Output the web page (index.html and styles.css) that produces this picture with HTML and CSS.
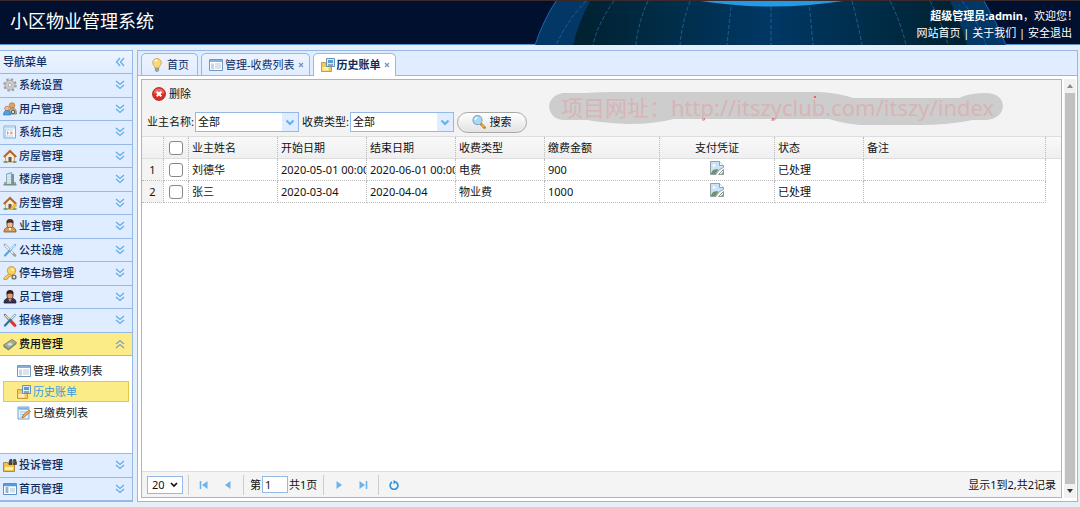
FILE: index.html
```html
<!DOCTYPE html>
<html lang="zh-CN">
<head>
<meta charset="utf-8">
<title>小区物业管理系统</title>
<link rel="stylesheet" href="styles.css">
</head>
<body>
<svg class="sprite" aria-hidden="true">
  <symbol id="down" viewBox="0 0 10 10"><path d="M1 1l4 3.5L9 1M1 5l4 3.5L9 5" fill="none" stroke="#60aee8" stroke-width="1.3"/></symbol>
  <symbol id="up" viewBox="0 0 10 10"><path d="M1 5l4-3.5L9 5M1 9l4-3.5L9 9" fill="none" stroke="#8a9fb0" stroke-width="1.3"/></symbol>
  <symbol id="left" viewBox="0 0 10 10"><path d="M5 1L1.500 5 5 9M9 1L5.500 5 9 9" fill="none" stroke="#60aee8" stroke-width="1.3"/></symbol>
  <symbol id="chev" viewBox="0 0 10 10"><path d="M1.500 3.500L5 7l3.500-3.500" fill="none" stroke="#62b0ee" stroke-width="2"/></symbol>
  <symbol id="gear" viewBox="0 0 14 14"><circle cx="7" cy="7" r="5.600" fill="none" stroke="#a2a2a2" stroke-width="2.400" stroke-dasharray="2.400 2"/><circle cx="7" cy="7" r="4.800" fill="#cacaca" stroke="#a0a0a0" stroke-width=".7"/><circle cx="7" cy="7" r="1.700" fill="#f4f7fc" stroke="#999" stroke-width=".7"/></symbol>
  <symbol id="users" viewBox="0 0 14 14"><circle cx="9" cy="3.500" r="2.800" fill="#e4a25c" stroke="#ad6a2e" stroke-width=".6"/><path d="M6 12c-.5-4 1-6 3.500-6s4 2 4 6z" fill="#c2b391" stroke="#766d55" stroke-width=".7"/><circle cx="10" cy="10" r="1.800" fill="#ddd" stroke="#555"/><circle cx="4" cy="6.500" r="2.300" fill="#f1c08e" stroke="#bc6a35" stroke-width=".7"/><path d="M.5 13c0-3 1-4.500 3.500-4.500S7.500 10 7.500 13z" fill="#4aa3e2" stroke="#2b70b3" stroke-width=".6"/></symbol>
  <symbol id="log" viewBox="0 0 14 14"><path d="M1 1h11.500v12H1z" fill="#f6fbff" stroke="#78abda"/><path d="M1.500 1.500H12v2H1.500z" fill="#b7d8f5"/><path d="M3 5h7M3 11h7M2.500 4v8" stroke="#9cc5e8" stroke-width=".7"/><path d="M4 8h2M7 8h3M4.500 6.500v3M8 6.500v3" stroke="#ef8b6a"/></symbol>
  <symbol id="house" viewBox="0 0 14 14"><path d="M2.500 6.500L7 3l4.500 3.500V13h-9z" fill="#f7ead2" stroke="#a98860" stroke-width=".7"/><path d="M5.500 8h3v5h-3z" fill="#6b5a50"/><path d="M.8 8L7 2l6.200 6" fill="none" stroke="#ae6a2b" stroke-width="2"/><path d="M.5 13h4M10 13h3.500" stroke="#5d9548" stroke-width="1.500"/></symbol>
  <symbol id="building" viewBox="0 0 14 14"><path d="M3.500 2l5-1.500v12h-5z" fill="#b6dbe9" stroke="#72909a" stroke-width=".7"/><path d="M8.500 2H11v10.500H8.500z" fill="#78939c"/><path d="M5 3v8M7 3v8" stroke="#fff" stroke-dasharray="1.500 1"/><path d="M.5 12.700h13M2 10v2.500M12 10v2.500" stroke="#7d9178" stroke-width="1.500"/></symbol>
  <symbol id="owner" viewBox="0 0 14 14"><path d="M1 13c0-3.500 2-5 6-5s6 1.500 6 5z" fill="#d49a4e" stroke="#825223" stroke-width=".8"/><path d="M4 3.500C4 1.500 5 .5 7 .5s3 1 3 3V6c0 1.500-1 3-3 3S4 7.500 4 6z" fill="#efb98a" stroke="#5f3920" stroke-width=".8"/><path d="M3.800 4.500C3 .8 5 .3 7 .3s4 .5 3.200 4.200C8.500 3 6 3 3.800 4.500z" fill="#4c3026"/><path d="M5.500 9L7 12l1.500-3z" fill="#fff"/></symbol>
  <symbol id="staff" viewBox="0 0 14 14"><path d="M1 13c0-3.500 2-5 6-5s6 1.500 6 5z" fill="#333350" stroke="#17172e" stroke-width=".8"/><path d="M4 3.500C4 1.500 5 .5 7 .5s3 1 3 3V6c0 1.500-1 3-3 3S4 7.500 4 6z" fill="#dc9d79" stroke="#54251d" stroke-width=".8"/><path d="M3.800 4.500C3 .8 5 .3 7 .3s4 .5 3.200 4.200C8.500 3 6 3 3.800 4.500z" fill="#332129"/><path d="M5.500 9L7 12l1.500-3z" fill="#eee"/><path d="M7 9v3" stroke="#b92e30"/></symbol>
  <symbol id="tools" viewBox="0 0 14 14"><path d="M2 2l8 8.500 2 2" stroke="#9aa3aa" stroke-width="2.600" stroke-linecap="round"/><path d="M2 2l8 8.500" stroke="#f2f5f6" stroke-width="1.500"/><path d="M12 2L2 12.500" stroke="#5ca6dc" stroke-width="2.200" stroke-linecap="round"/><path d="M12 2L7 7" stroke="#dce8ee" stroke-width="1.400"/></symbol>
  <symbol id="repair" viewBox="0 0 14 14"><path d="M2 2l9 10" stroke="#65707b" stroke-width="2.400" stroke-linecap="round"/><path d="M2 2l5 5" stroke="#f2d99c" stroke-width="1.300"/><path d="M8 8l4 4.500" stroke="#dc3c25" stroke-width="2.800" stroke-linecap="round"/><path d="M12 2L2 12.500" stroke="#3b6d9b" stroke-width="2.200" stroke-linecap="round"/><path d="M12.500 1.500L8 6" stroke="#e7edf0" stroke-width="1.500"/></symbol>
  <symbol id="key" viewBox="0 0 14 14"><path d="M7 6.500L.8 12v1.500h3.400V12h1.500v-1.500h1.500L9 8.500" fill="#f6ce4d" stroke="#c18c29" stroke-width=".7"/><circle cx="8.500" cy="4.700" r="4.200" fill="#f9d25a" stroke="#c18c29" stroke-width=".8"/><circle cx="9.500" cy="3.700" r="1.200" fill="#fff6d0"/><circle cx="11" cy="11" r="1.900" fill="#e5e5e5" stroke="#6d7060" stroke-width="1.400"/></symbol>
  <symbol id="money" viewBox="0 0 14 14"><path d="M.5 8L9 2.500l4.500 3L5.500 12z" fill="#a5b096" stroke="#6c765f" stroke-width=".8"/><path d="M.5 8v2l5 3.500 8-6.500V5.500L5.500 12z" fill="#7e8970"/><ellipse cx="7" cy="7.300" rx="2.200" ry="1.500" fill="#d9e0cf"/></symbol>
  <symbol id="list" viewBox="0 0 14 14"><path d="M.5 1.500h13v11H.5z" fill="#fff" stroke="#7197bd"/><path d="M1 2h12v2H1z" fill="#86afdc"/><path d="M2 5.500h3v6H2z" fill="#bfd8ef"/><path d="M6 6h6M6 8h6M6 10h6" stroke="#a9b9c9" stroke-width=".8"/></symbol>
  <symbol id="bill" viewBox="0 0 14 14"><path d="M.5 4.500h4l1 1.500h5v7.500H.5z" fill="#f5c954" stroke="#bd8a2b" stroke-width=".8"/><path d="M5.500.5h8v8h-8z" fill="#d8ebfa" stroke="#5788b6" stroke-width=".9"/><path d="M7 2h5v3H7z" fill="#5d9bd1"/><path d="M7 7h5" stroke="#45627c"/><path d="M1.500 9h6v3.500h-6z" fill="#fff0b8"/></symbol>
  <symbol id="edit" viewBox="0 0 14 14"><path d="M1 1h11v12H1z" fill="#e8f4fd" stroke="#6da5d6"/><path d="M1.500 1.500h10v2.200h-10z" fill="#79b3e3"/><path d="M3 6h7M3 8.500h5M3 11h3" stroke="#93b9da" stroke-width=".8"/><path d="M5 12l1-3 6-5 1.500 1.800L7.500 11z" fill="#f3a851" stroke="#b36a25" stroke-width=".7"/></symbol>
  <symbol id="complain" viewBox="0 0 14 14"><path d="M.5 4.500h4L5.500 6h6v7.500H.5z" fill="#f1c24c" stroke="#a67520" stroke-width=".8"/><path d="M2 9h8v3H2z" fill="#fff0b0"/><path d="M7 1.500h2v5H6V4zM11 1.500h1.500l1 3v2h-3v-5z" fill="#4b4543" stroke="#2d2929" stroke-width=".6"/><path d="M8.500 4h3" stroke="#777" stroke-width="1.300"/></symbol>
  <symbol id="homepage" viewBox="0 0 14 14"><path d="M.5 1.500h13v11H.5z" fill="#fff" stroke="#5c91c6"/><path d="M1 2h12v2.300H1z" fill="#559be0"/><path d="M2.500 6h3M2.500 8h3M2.500 10h3" stroke="#465f7c"/><path d="M7 6h5v4.500H7z" fill="#c9dff4"/></symbol>
  <symbol id="bulb" viewBox="0 0 14 14"><path d="M7 .5a4.300 4.300 0 0 1 4.300 4.300C11.300 7 9 8 9 10H5C5 8 2.700 7 2.700 4.800A4.300 4.300 0 0 1 7 .5z" fill="#fbd876" stroke="#d79a3c" stroke-width=".8"/><path d="M5 3.500c.5-1 1.300-1.500 2.300-1.500" stroke="#fff" stroke-width="1.300" fill="none"/><path d="M5.300 10.500h3.400v2.200L7 13.700l-1.700-1z" fill="#a9a9a9" stroke="#777" stroke-width=".6"/></symbol>
  <symbol id="delete" viewBox="0 0 14 14"><circle cx="7" cy="7" r="6.500" fill="#db2c25" stroke="#a8211d" stroke-width=".8"/><path d="M1.500 6a5.600 5.600 0 0 1 11 0c-3 1.500-8 1.500-11 0z" fill="#f0857b" opacity=".7"/><path d="M4.700 4.700l4.600 4.600M9.300 4.700L4.700 9.300" stroke="#fff" stroke-width="2"/></symbol>
  <symbol id="search" viewBox="0 0 14 14"><path d="M8.500 8.500l4 4" stroke="#b7772e" stroke-width="2.600" stroke-linecap="round"/><path d="M9.500 9.300l2.700 2.700" stroke="#f7c24f" stroke-width="1.200"/><circle cx="5.500" cy="5.200" r="4.500" fill="#a6dbfa" stroke="#8dabc4" stroke-width="1.200"/><path d="M3 5c0-1.500 1-2.300 2.500-2.300" stroke="#fff" stroke-width="1.200" fill="none"/></symbol>
  <symbol id="broken" viewBox="0 0 14 14"><path d="M.5.5h9l4 4v2L9 9l-3 4.500H.5z" fill="#c9e3f8" stroke="#8b979e" stroke-width=".9"/><path d="M9.500.5v4h4" fill="#fff" stroke="#8b979e" stroke-width=".9"/><path d="M1 12.500C2 9 4.500 7.500 8.500 8.500L5.500 13H1z" fill="#6d9464"/><circle cx="4" cy="4.500" r="1.300" fill="#fff"/><path d="M8.500 13.500l5-5v5z" fill="#fff" stroke="#7f8e88" stroke-width=".9"/><path d="M11 12.700l2-1.500v1.500z" fill="#5e8654"/></symbol>
  <symbol id="first" viewBox="0 0 10 10"><path d="M1.500 1v8" stroke="#6bb4ed" stroke-width="1.600"/><path d="M8.500 1v8L3 5z" fill="#6bb4ed"/></symbol>
  <symbol id="prev" viewBox="0 0 10 10"><path d="M7.500 1v8L2 5z" fill="#6bb4ed"/></symbol>
  <symbol id="next" viewBox="0 0 10 10"><path d="M2.500 1v8L8 5z" fill="#6bb4ed"/></symbol>
  <symbol id="last" viewBox="0 0 10 10"><path d="M8.500 1v8" stroke="#6bb4ed" stroke-width="1.600"/><path d="M1.500 1v8L7 5z" fill="#6bb4ed"/></symbol>
  <symbol id="refresh" viewBox="0 0 10 10"><path d="M3 2.100A3.900 3.900 0 1 0 7.200 2.200" fill="none" stroke="#3394de" stroke-width="1.700"/><path d="M4.500 0L8 2 4.500 4.300z" fill="#3394de"/></symbol>
</svg>

<header class="top">
  <svg class="globe" viewBox="0 0 480 44" aria-hidden="true">
    <defs><linearGradient id="core"><stop offset="0" stop-color="#00212f"/><stop offset=".25" stop-color="#002d49"/><stop offset=".5" stop-color="#003865"/><stop offset=".75" stop-color="#002d49"/><stop offset="1" stop-color="#00212f"/></linearGradient></defs>
    <path d="M21 0Q8 20 0 44H471Q461 20 449 0z" fill="#033766"/>
    <path d="M55 0Q44 20 38 44H432Q425 20 415 0z" fill="url(#core)"/>
    <path d="M21 0Q8 20 0 44M449 0Q461 20 471 44" fill="none" stroke="#1b69ae"/>
    <path d="M51 0Q32 20 21 44M79 0Q63 22 58 44M113 0Q103 22 101 44M155 0Q147 22 145 44M196 6L192 44M236 6V44M274 0L278 44M317 0Q323 22 327 44M355 0Q366 22 371 44M395 0Q407 22 413 44M427 0Q443 20 451 44" fill="none" stroke="#2967a0" stroke-width=".8" stroke-dasharray="4 2"/>
    <path d="M166 0Q236 11 308 0z" fill="#229be6"/>
  </svg>
  <h1 class="brand">小区物业管理系统</h1>
  <div class="account">
    <p><b>超级管理员:admin</b>，欢迎您！</p>
    <nav><a href="#">网站首页</a> | <a href="#">关于我们</a> | <a href="#">安全退出</a></nav>
  </div>
</header>

<div class="layout">
  <aside class="side">
    <div class="side-title"><span>导航菜单</span><svg class="mini"><use href="#left"/></svg></div>
    <button class="group"><svg class="icon"><use href="#gear"/></svg><span>系统设置</span><svg class="mini"><use href="#down"/></svg></button>
    <button class="group"><svg class="icon"><use href="#users"/></svg><span>用户管理</span><svg class="mini"><use href="#down"/></svg></button>
    <button class="group"><svg class="icon"><use href="#log"/></svg><span>系统日志</span><svg class="mini"><use href="#down"/></svg></button>
    <button class="group"><svg class="icon"><use href="#house"/></svg><span>房屋管理</span><svg class="mini"><use href="#down"/></svg></button>
    <button class="group"><svg class="icon"><use href="#building"/></svg><span>楼房管理</span><svg class="mini"><use href="#down"/></svg></button>
    <button class="group"><svg class="icon"><use href="#house"/><path d="M7 12.500l5-5 2 2-5 4.500H7z" fill="#f5c23c" stroke="#c98a22" stroke-width=".5"/></svg><span>房型管理</span><svg class="mini"><use href="#down"/></svg></button>
    <button class="group"><svg class="icon"><use href="#owner"/></svg><span>业主管理</span><svg class="mini"><use href="#down"/></svg></button>
    <button class="group"><svg class="icon"><use href="#tools"/></svg><span>公共设施</span><svg class="mini"><use href="#down"/></svg></button>
    <button class="group"><svg class="icon"><use href="#key"/></svg><span>停车场管理</span><svg class="mini"><use href="#down"/></svg></button>
    <button class="group"><svg class="icon"><use href="#staff"/></svg><span>员工管理</span><svg class="mini"><use href="#down"/></svg></button>
    <button class="group"><svg class="icon"><use href="#repair"/></svg><span>报修管理</span><svg class="mini"><use href="#down"/></svg></button>
    <button class="group open"><svg class="icon"><use href="#money"/></svg><span>费用管理</span><svg class="mini"><use href="#up"/></svg></button>
    <div class="sub">
      <a href="#"><svg class="icon"><use href="#list"/></svg>管理-收费列表</a>
      <a href="#" class="current"><svg class="icon"><use href="#bill"/></svg>历史账单</a>
      <a href="#"><svg class="icon"><use href="#edit"/></svg>已缴费列表</a>
    </div>
    <button class="group"><svg class="icon"><use href="#complain"/></svg><span>投诉管理</span><svg class="mini"><use href="#down"/></svg></button>
    <button class="group"><svg class="icon"><use href="#homepage"/></svg><span>首页管理</span><svg class="mini"><use href="#down"/></svg></button>
  </aside>

  <main class="main">
    <div class="tabs">
      <button class="tab"><svg class="icon"><use href="#bulb"/></svg>首页</button>
      <button class="tab"><svg class="icon"><use href="#list"/></svg>管理-收费列表<svg class="close" viewBox="0 0 6 6"><path d="M1 1l4 4M5 1L1 5" stroke="#7095bd" stroke-width="1.200"/></svg></button>
      <button class="tab active"><svg class="icon"><use href="#bill"/></svg>历史账单<svg class="close" viewBox="0 0 6 6"><path d="M1 1l4 4M5 1L1 5" stroke="#7095bd" stroke-width="1.200"/></svg></button>
    </div>
    <div class="content">
      <section class="panel">
        <div class="toolbar">
          <button class="remove"><svg class="icon"><use href="#delete"/></svg>删除</button>
          <form class="filters">
            <label for="owner-name">业主名称:</label>
            <div class="combo"><select id="owner-name"><option>全部</option></select><span class="arrow"><svg class="mini"><use href="#chev"/></svg></span></div>
            <label for="fee-type">收费类型:</label>
            <div class="combo"><select id="fee-type"><option>全部</option></select><span class="arrow"><svg class="mini"><use href="#chev"/></svg></span></div>
            <button type="button" class="search"><svg class="icon"><use href="#search"/></svg>搜索</button>
          </form>
          <div class="mark">
            <svg viewBox="0 0 454 34" preserveAspectRatio="none" aria-hidden="true"><path d="M14 1H38Q48 0 66 0H270Q290 1 304 6H410Q420 1 438 1Q453 2 454 14Q453 26 438 28H424Q400 33 370 33H312Q296 32 280 27H125Q105 32 80 32Q55 31 38 28H14Q2 27 0 15Q1 3 14 1z" fill="#cdcdcd"/><path d="M153 27h3M223 27h3M265 5h2" stroke="#e86464" stroke-width="2"/></svg>
            <span>项目网址：http://itszyclub.com/itszy/index</span>
          </div>
        </div>
        <div class="grid">
          <table>
            <colgroup><col class="c-num"><col class="c-check"><col class="c-std"><col class="c-std"><col class="c-std"><col class="c-std"><col class="c-wide"><col class="c-wide"><col class="c-std"><col class="c-note"><col></colgroup>
            <thead><tr><th></th><th><input type="checkbox" aria-label="全选"></th><th>业主姓名</th><th>开始日期</th><th>结束日期</th><th>收费类型</th><th>缴费金额</th><th class="mid">支付凭证</th><th>状态</th><th>备注</th><th class="rest"></th></tr></thead>
            <tbody>
              <tr><td class="num">1</td><td><input type="checkbox" aria-label="选择刘德华"></td><td>刘德华</td><td>2020-05-01 00:00</td><td>2020-06-01 00:00</td><td>电费</td><td>900</td><td class="mid"><svg class="icon"><use href="#broken"/></svg></td><td>已处理</td><td></td></tr>
              <tr><td class="num">2</td><td><input type="checkbox" aria-label="选择张三"></td><td>张三</td><td>2020-03-04</td><td>2020-04-04</td><td>物业费</td><td>1000</td><td class="mid"><svg class="icon"><use href="#broken"/></svg></td><td>已处理</td><td></td></tr>
            </tbody>
          </table>
        </div>
        <footer class="pager">
          <div class="size"><select aria-label="每页条数"><option>20</option></select><svg viewBox="0 0 8 6"><path d="M1 1l3 3 3-3" fill="none" stroke="#111" stroke-width="1.700"/></svg></div>
          <i></i>
          <button aria-label="第一页"><svg class="mini"><use href="#first"/></svg></button>
          <button aria-label="上一页"><svg class="mini"><use href="#prev"/></svg></button>
          <i></i>
          <div class="page"><label for="page">第</label><input id="page" value="1"><span>共1页</span></div>
          <i></i>
          <button aria-label="下一页"><svg class="mini"><use href="#next"/></svg></button>
          <button aria-label="最后一页"><svg class="mini"><use href="#last"/></svg></button>
          <i></i>
          <button aria-label="刷新"><svg class="mini"><use href="#refresh"/></svg></button>
          <span class="total">显示1到2,共2记录</span>
        </footer>
      </section>
      <div class="scroll" aria-hidden="true">
        <svg viewBox="0 0 6 4"><path d="M0 4l3-4 3 4z" fill="#8b8b8b"/></svg>
        <div class="thumb"></div>
        <svg viewBox="0 0 6 4"><path d="M0 0l3 4 3-4z" fill="#333"/></svg>
      </div>
    </div>
  </main>
</div>
</body>
</html>
```
FILE: styles.css
```css
* { box-sizing: border-box; }
html, body { height: 100%; }
body {
  margin: 0;
  display: flex;
  flex-direction: column;
  overflow: hidden;
  background: #e6eef8;
  color: #111;
  font: 11px/16px "Noto Sans", "Noto Sans CJK SC", sans-serif;
}
button, input, select { font: inherit; color: inherit; }
button { border: 0; background: none; padding: 0; }
a { color: inherit; text-decoration: none; }
p, h1 { margin: 0; }
.sprite { display: none; }
.icon { width: 14px; height: 14px; flex: none; }
.mini { width: 10px; height: 10px; flex: none; display: block; }

.top {
  position: relative;
  flex: none;
  height: 45px;
  display: flex;
  justify-content: space-between;
  background: #00102e;
  border-top: 1px solid #3a2a2c;
  border-bottom: 1px solid #5d92cb;
  color: #fff;
}
.globe { position: absolute; right: 65px; top: 0; width: 480px; height: 44px; }
.brand { font-size: 18px; line-height: 24px; font-weight: 400; padding: 8px 10px; }
.account { position: relative; padding: 6px 8px 0 0; text-align: right; line-height: 17px; font-size: 11px; }
.account p { margin-right: -6px; }

.layout { flex: 1; min-height: 0; display: flex; gap: 4px; padding: 5px 2px 5px 0; }
.side {
  width: 133px;
  flex: none;
  display: flex;
  flex-direction: column;
  border: 1px solid #95b8e7;
  border-left: 0;
  background: #fff;
}
.side-title, .group {
  display: flex;
  align-items: center;
  padding: 0 7px 0 3px;
  border-bottom: 1px solid #95b8e7;
  color: #0e2d5f;
  font-weight: 500;
}
.side-title { height: 23px; flex: none; justify-content: space-between; background: linear-gradient(#edf4ff, #e0ecff); }
.group { flex: 1; min-height: 0; gap: 2px; background: #e0ecff; text-align: left; }
.group span { flex: 1; }
.group.open { background: #fbec88; color: #111; }
.sub { flex: 0 0 98px; padding: 4px 3px; border-bottom: 1px solid #95b8e7; }
.sub a { display: flex; align-items: center; gap: 2px; height: 21px; padding-left: 13px; border: 1px solid transparent; }
.sub a.current { background: #fbec88; border-color: #e5c943; color: #3a9be0; }

.main { flex: 1; min-width: 0; display: flex; flex-direction: column; border: 1px solid #95b8e7; background: #fff; }
.tabs { display: flex; gap: 3px; height: 25px; flex: none; padding: 2px 3px 0; background: #e0ecff; border-bottom: 1px solid #95b8e7; }
.tab {
  display: flex;
  align-items: center;
  gap: 2px;
  padding: 0 8px;
  border: 1px solid #95b8e7;
  border-bottom: 0;
  border-radius: 5px 5px 0 0;
  background: linear-gradient(#edf4ff, #e0ecff);
  color: #0e2d5f;
}
.tab:not(.active) { height: 22px; }
.tab:first-child { gap: 3px; }
.tab:not(:first-child) { padding: 0 5px 0 7px; }
.tab.active { height: 23px; background: #fff; font-weight: 600; }
.close { width: 6px; height: 6px; margin-left: 1px; }

.content { flex: 1; min-height: 0; display: flex; gap: 2px; padding: 3px 1px 3px 3px; }
.panel { flex: 1; min-width: 0; display: flex; flex-direction: column; border: 1px solid #95b8e7; }
.toolbar { position: relative; flex: none; padding: 6px 5px 3px; background: #f3f3f3; border-bottom: 1px solid #ddd; }
.remove { display: flex; align-items: center; gap: 3px; height: 16px; padding-left: 5px; }
.filters { display: flex; align-items: center; height: 22px; margin-top: 9px; }
.combo { display: flex; width: 104px; height: 20px; margin: 0 3px 0 1px; border: 1px solid #95b8e7; background: #fff; }
.combo select { flex: 1; min-width: 0; appearance: none; border: 0; padding: 0 2px; background: #fff; }
.arrow { width: 16px; display: flex; align-items: center; justify-content: center; background: #e0ecff; }
.search {
  display: flex;
  align-items: center;
  justify-content: center;
  gap: 3px;
  width: 70px;
  height: 21px;
  border: 1px solid #a8a8a8;
  border-radius: 11px;
  background: linear-gradient(#fff, #e2e2e2);
}
.mark { position: absolute; right: 58px; top: 12px; width: 454px; height: 34px; }
.mark svg { position: absolute; width: 100%; height: 100%; }
.mark span { position: relative; padding-left: 12px; font-size: 22px; line-height: 30px; color: #d8b4b6; white-space: nowrap; }

.grid { flex: 1; min-height: 0; overflow: hidden; }
table { width: 100%; table-layout: fixed; border-collapse: separate; border-spacing: 0; }
.c-num { width: 22px; }
.c-check { width: 25px; }
.c-std { width: 89px; }
.c-wide { width: 115px; }
.c-note { width: 182px; }
th, td {
  height: 22px;
  padding: 0 0 0 3px;
  border-right: 1px dotted #bbb;
  border-bottom: 1px dotted #bbb;
  overflow: hidden;
  text-align: left;
  font-weight: 400;
  white-space: nowrap;
}
th { background: linear-gradient(#f9f9f9, #efefef); border-bottom: 1px solid #ddd; }
th.rest { border-right: 0; }
th:nth-child(2), td:nth-child(2) { padding: 0; text-align: center; }
.num { padding: 0; text-align: center; background: #f4f4f4; }
.mid { padding: 0; text-align: center; }
td .icon { display: block; margin: 0 auto 3px; }
input[type="checkbox"] {
  appearance: none;
  display: block;
  width: 14px;
  height: 14px;
  margin: 0 auto;
  border: 1px solid #888;
  border-radius: 3px;
  background: #fff;
}

.pager { flex: none; display: flex; align-items: center; height: 26px; padding: 0 5px; background: #f4f4f4; border-top: 1px solid #ddd; }
.size { display: flex; align-items: center; width: 36px; height: 18px; margin-right: 2px; padding-right: 4px; border: 1px solid #95b8e7; background: #fff; }
.size select { flex: 1; min-width: 0; appearance: none; border: 0; padding: 0 0 0 4px; background: #fff; }
.size svg { width: 8px; height: 6px; }
.pager i { width: 1px; height: 20px; margin: 0 3px; background: #ccc; }
.pager button { width: 20px; height: 20px; margin: 0 2px; display: flex; align-items: center; justify-content: center; }
.page { display: flex; align-items: center; gap: 1px; padding: 0 3px; }
.page input { width: 26px; height: 17px; padding: 0 2px; border: 1px solid #95b8e7; background: #fff; }
.total { margin-left: auto; }

.scroll { width: 12px; flex: none; display: flex; flex-direction: column; align-items: center; gap: 5px; padding: 5px 0; background: #f1f1f1; }
.scroll svg { width: 6px; height: 4px; flex: none; }
.thumb { flex: 1; width: 10px; background: #c1c1c1; }
```
